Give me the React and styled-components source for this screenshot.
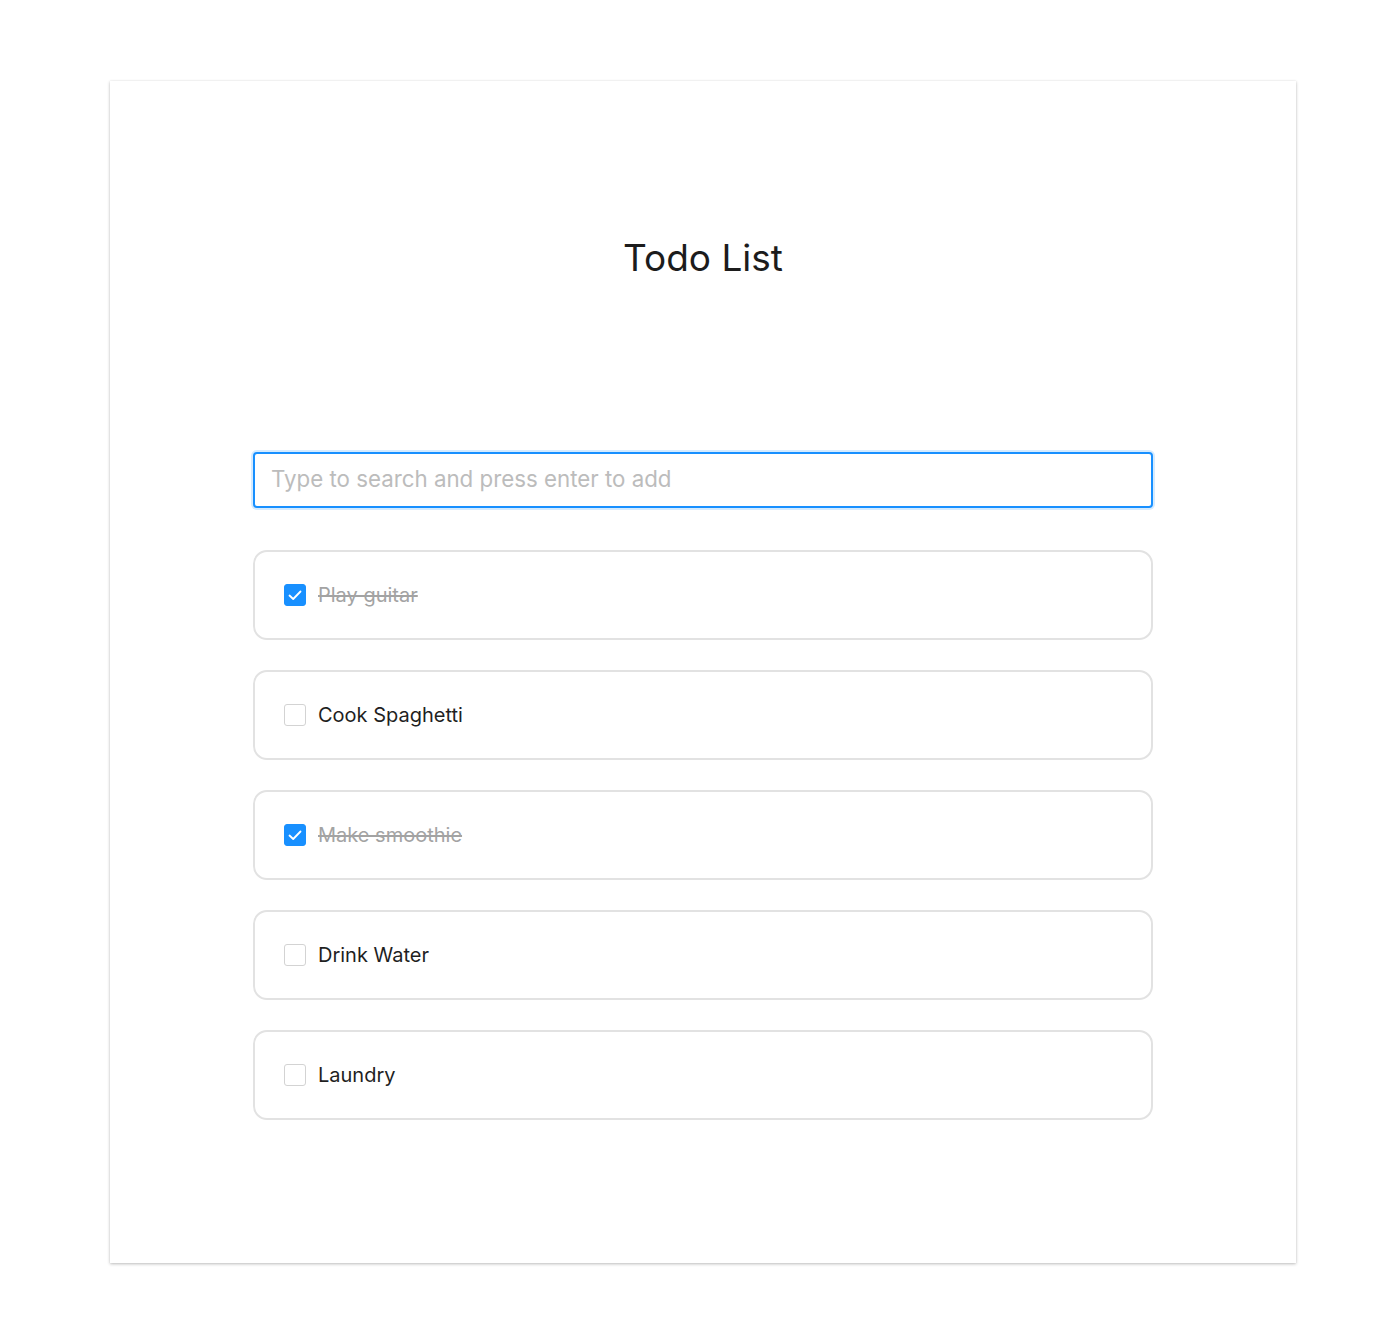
import React, { useState } from 'react';
import styled, { createGlobalStyle } from 'styled-components';

const GlobalStyle = createGlobalStyle`
  body {
    margin: 0;
    background: #fff;
    font-family: Inter, "Noto Sans", "Liberation Sans", sans-serif;
    color: #1f1f1f;
  }
`;

const Page = styled.div`
  padding: 81px 104px 67px 110px;
`;

const Card = styled.div`
  background: #fff;
  box-shadow: 0 1px 3px rgba(0, 0, 0, 0.26), 0 0 1px rgba(0, 0, 0, 0.08);
  padding: 154px 0 143px;
  display: flex;
  flex-direction: column;
  align-items: center;
`;

const Title = styled.h1`
  margin: 0;
  font-size: 37px;
  line-height: 46px;
  font-weight: 400;
  color: #1c1c1c;
`;

const Column = styled.div`
  width: 900px;
  margin-top: 171px;
  display: flex;
  flex-direction: column;
`;

const SearchInput = styled.input`
  box-sizing: border-box;
  width: 100%;
  height: 56px;
  padding: 0 16px 3px;
  border: 2px solid #1890ff;
  border-radius: 4px;
  box-shadow: 0 0 0 2px rgba(24, 144, 255, 0.18);
  font-family: inherit;
  font-size: 22.3px;
  color: #1f1f1f;
  outline: none;
  &::placeholder {
    color: #bcbcbc;
  }
`;

const List = styled.ul`
  list-style: none;
  margin: 42px 0 0;
  padding: 0;
  display: flex;
  flex-direction: column;
  gap: 30px;
`;

const Item = styled.li`
  box-sizing: border-box;
  height: 90px;
  border: 2px solid #e2e2e2;
  border-radius: 14px;
  display: flex;
  align-items: center;
  padding: 0 0 0 29px;
  cursor: pointer;
`;

const Box = styled.span`
  box-sizing: border-box;
  width: 22px;
  height: 22px;
  border-radius: 3px;
  border: 1px solid ${p => (p.$checked ? '#1890ff' : '#d3d3d3')};
  background: ${p => (p.$checked ? '#1890ff' : '#fff')};
  display: flex;
  align-items: center;
  justify-content: center;
  flex-shrink: 0;
`;

const Label = styled.span`
  margin-left: 12px;
  font-size: 20px;
  color: ${p => (p.$done ? '#a3a3a3' : '#1f1f1f')};
  text-decoration: ${p => (p.$done ? 'line-through' : 'none')};
`;

const initial = [
  { id: 1, text: 'Play guitar', done: true },
  { id: 2, text: 'Cook Spaghetti', done: false },
  { id: 3, text: 'Make smoothie', done: true },
  { id: 4, text: 'Drink Water', done: false },
  { id: 5, text: 'Laundry', done: false },
];

const Check = () => (
  <svg width="18" height="18" viewBox="0 0 18 18">
    <polyline points="3.5,9.5 7.2,13 14.5,5.5" fill="none" stroke="#fff" strokeWidth="1.8" strokeLinecap="round" strokeLinejoin="round" />
  </svg>
);

const App = () => {
  const [todos, setTodos] = useState(initial);
  const toggle = id => setTodos(todos.map(t => (t.id === id ? { ...t, done: !t.done } : t)));

  return (
    <>
      <GlobalStyle />
      <Page>
        <Card>
          <Title>Todo List</Title>
          <Column>
            <SearchInput placeholder="Type to search and press enter to add" />
            <List>
              {todos.map(t => (
                <Item key={t.id} onClick={() => toggle(t.id)}>
                  <Box $checked={t.done}>{t.done && <Check />}</Box>
                  <Label $done={t.done}>{t.text}</Label>
                </Item>
              ))}
            </List>
          </Column>
        </Card>
      </Page>
    </>
  );
};

export default App;
